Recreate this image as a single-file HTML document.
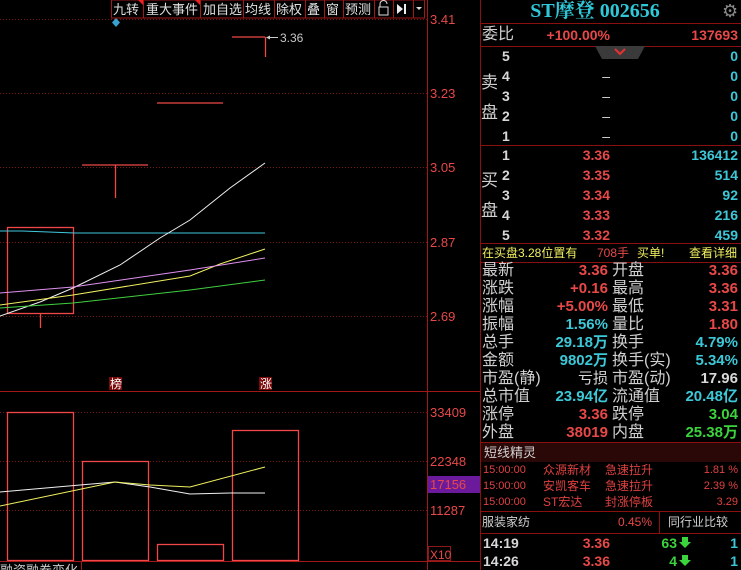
<!DOCTYPE html>
<html><head><meta charset="utf-8"><style>
*{margin:0;padding:0;box-sizing:border-box}
body{width:741px;height:570px;background:#000;overflow:hidden;position:relative;font-family:"Liberation Sans","Noto Sans CJK SC",sans-serif;}
.a{position:absolute;white-space:nowrap}
.r{color:#e84848}.c{color:#3cc8d8}.g{color:#3cd43c}.w{color:#d8d8d8}.y{color:#f0f060}
.b{font-weight:bold}
.hl{position:absolute;height:1px;background:#8a1010}
.vl{position:absolute;width:1px;background:#8a1010}
.lab{font-size:14px;line-height:18px;color:#d0d0d0}
.num{font-size:14px;line-height:18px;font-weight:bold;text-align:right}
</style></head><body>
<svg class="a" style="left:0;top:0" width="480" height="570">
<g stroke="#7a1818" stroke-dasharray="1,2" stroke-width="1">
<line x1="0" y1="19.5" x2="427" y2="19.5"/><line x1="0" y1="93.5" x2="427" y2="93.5"/><line x1="0" y1="167.5" x2="427" y2="167.5"/><line x1="0" y1="242.5" x2="427" y2="242.5"/><line x1="0" y1="316.5" x2="427" y2="316.5"/>
<line x1="0" y1="412.5" x2="427" y2="412.5"/><line x1="0" y1="461.5" x2="427" y2="461.5"/><line x1="0" y1="510.5" x2="427" y2="510.5"/>
</g>
<line x1="427.5" y1="0" x2="427.5" y2="570" stroke="#a01818"/>
<line x1="0" y1="391.5" x2="480" y2="391.5" stroke="#a01818"/>
<line x1="0" y1="561.5" x2="480" y2="561.5" stroke="#a01818"/>
<g stroke="#f04848" fill="none" stroke-width="1.3">
<rect x="7.5" y="227.5" width="66" height="86"/><line x1="40.5" y1="313" x2="40.5" y2="328"/>
<line x1="82" y1="165" x2="148" y2="165"/><line x1="115.5" y1="165" x2="115.5" y2="198"/>
<line x1="157" y1="103" x2="223" y2="103"/>
<line x1="232" y1="37" x2="265" y2="37"/><line x1="265.5" y1="37" x2="265.5" y2="57"/>
<rect x="7.5" y="412.5" width="66" height="148"/>
<rect x="82.5" y="461.5" width="66" height="99"/>
<rect x="157.5" y="544.5" width="66" height="16"/>
<rect x="232.5" y="430.5" width="66" height="130"/>
</g>
<polyline points="0,231 22,231 75,233 265,233" stroke="#40c8e0" fill="none"/>
<polyline points="0,316 40,302 73,288 120,265 160,238 190,220 230,188 265,163" stroke="#f0f0f0" fill="none"/>
<polyline points="0,305 73,295 190,276 220,264 265,249" stroke="#f0f060" fill="none"/>
<polyline points="0,293 73,287 190,270 265,258" stroke="#e090f0" fill="none"/>
<polyline points="0,308 73,303 190,290 265,280" stroke="#40d040" fill="none"/>
<polyline points="0,492 80,485 115,482 150,487 190,494 230,493 265,493" stroke="#f0f0f0" fill="none"/>
<polyline points="0,506 115,482 150,485 190,487 265,467" stroke="#f0f060" fill="none"/>
<line x1="268" y1="37.5" x2="278" y2="37.5" stroke="#ccc"/>
<path d="M266 37.5 L270 35.5 L270 39.5Z" fill="#ccc"/>
<text x="280" y="42" fill="#c8c8c8" font-size="12" font-family="Liberation Sans">3.36</text>
<path d="M116 18 L120 22.5 L116 27 L112 22.5Z" fill="#3aa0d0"/>
<g fill="#e84848" font-size="13" font-family="Liberation Sans">
<text x="430" y="24">3.41</text><text x="430" y="98">3.23</text><text x="430" y="172">3.05</text><text x="430" y="247">2.87</text><text x="430" y="321">2.69</text>
<text x="430" y="417">33409</text><text x="430" y="466">22348</text><text x="430" y="515">11287</text>
</g>
<rect x="428" y="476" width="52" height="17" fill="#6a1a9a"/>
<text x="430" y="489" fill="#e84848" font-size="13" font-family="Liberation Sans">17156</text>
<rect x="428.5" y="546.5" width="22" height="14" fill="none" stroke="#8a1818"/>
<text x="430" y="559" fill="#e84848" font-size="12" font-family="Liberation Sans">X10</text>
<rect x="109" y="377" width="13" height="13" fill="#7a0a0a"/><text x="110" y="388" fill="#fff" font-size="12" font-family="Noto Sans CJK SC">榜</text>
<rect x="259" y="377" width="13" height="13" fill="#7a0a0a"/><text x="260" y="388" fill="#fff" font-size="12" font-family="Noto Sans CJK SC">涨</text>
<line x1="81.5" y1="562" x2="81.5" y2="570" stroke="#a01818"/>
<text x="0" y="575" fill="#ccc" font-size="13" font-family="Noto Sans CJK SC">融资融券变化</text>
<rect x="111.5" y="0" width="313" height="18" fill="#000" stroke="#a01818"/>
<g stroke="#a01818"><line x1="143.5" y1="0" x2="143.5" y2="18"/><line x1="200.5" y1="0" x2="200.5" y2="18"/><line x1="243.5" y1="0" x2="243.5" y2="18"/><line x1="274.5" y1="0" x2="274.5" y2="18"/><line x1="305.5" y1="0" x2="305.5" y2="18"/><line x1="324.5" y1="0" x2="324.5" y2="18"/><line x1="343.5" y1="0" x2="343.5" y2="18"/><line x1="374.5" y1="0" x2="374.5" y2="18"/><line x1="393.5" y1="0" x2="393.5" y2="18"/><line x1="413.5" y1="0" x2="413.5" y2="18"/></g>
<path d="M138 0 L143 0 L143 5Z M195 0 L200 0 L200 5Z" fill="#f02020"/>
<g fill="#e0e0e0" font-size="13" font-family="Noto Sans CJK SC">
<text x="113" y="14">九转</text><text x="146" y="14">重大事件</text><text x="203" y="14">加自选</text><text x="245" y="14">均线</text><text x="276" y="14">除权</text><text x="307" y="14">叠</text><text x="326" y="14">窗</text><text x="345" y="14">预测</text>
</g>
<rect x="379" y="7" width="9" height="8" fill="none" stroke="#ddd"/><path d="M380 7 V4 a3.5 3.5 0 0 1 7 0" fill="none" stroke="#ddd"/>
<path d="M397 4 L403 9 L397 14Z" fill="#eee"/><rect x="404" y="4" width="2" height="10" fill="#eee"/>
<path d="M416 7 L422 7 L419 10Z" fill="#ddd"/>
</svg>

<div class="vl" style="left:480px;top:0;height:570px"></div>
<div class="a b c" style="left:480px;width:230px;top:0;text-align:center;font:bold 20px 'Liberation Serif','Noto Serif CJK SC',serif;line-height:22px;color:#30c8d8">ST摩登 002656</div>
<div class="a" style="left:722px;top:0;font-size:18px;line-height:22px;color:#888">⚙</div>
<div class="hl" style="left:480px;width:261px;top:23px"></div>
<div class="a lab" style="left:482px;top:25px;font-size:16px;line-height:20px">委比</div>
<div class="a num r" style="left:530px;width:80px;top:26px">+100.00%</div>
<div class="a num r" style="left:650px;width:88px;top:26px">137693</div>
<div class="hl" style="left:480px;width:261px;top:46px"></div>
<svg class="a" style="left:595px;top:46px" width="50" height="14"><path d="M0 0 H50 L43 13 H7Z" fill="#3a3a3a"/><path d="M20 3 L25 8 L30 3" stroke="#e83030" stroke-width="2" fill="none"/></svg>
<div class="a lab" style="left:481px;top:68px;font-size:17px;line-height:30px;width:18px">卖<br>盘</div>
<div class="a lab" style="left:481px;top:166px;font-size:17px;line-height:30px;width:18px">买<br>盘</div>
<div class="a num w" style="left:502px;top:46px;text-align:left;line-height:20px">5<br>4<br>3<br>2<br>1</div>
<div class="a num w" style="left:560px;width:50px;top:46px;line-height:20px;font-weight:normal"><br>–<br>–<br>–<br>–</div>
<div class="a num c" style="left:680px;width:58px;top:46px;line-height:20px">0<br>0<br>0<br>0<br>0</div>
<div class="hl" style="left:480px;width:261px;top:145px"></div>
<div class="a num w" style="left:502px;top:145px;text-align:left;line-height:20px">1<br>2<br>3<br>4<br>5</div>
<div class="a num r" style="left:560px;width:50px;top:145px;line-height:20px">3.36<br>3.35<br>3.34<br>3.33<br>3.32</div>
<div class="a num c" style="left:660px;width:78px;top:145px;line-height:20px">136412<br>514<br>92<br>216<br>459</div>
<div class="hl" style="left:480px;width:261px;top:243px"></div>
<div class="a y" style="left:482px;top:244px;font-size:12px;line-height:18px">在买盘3.28位置有</div>
<div class="a r" style="left:597px;top:244px;font-size:12px;line-height:18px">708手</div>
<div class="a y" style="left:637px;top:244px;font-size:12px;line-height:18px">买单!</div>
<div class="a y" style="left:689px;top:244px;font-size:12px;line-height:18px">查看详细</div>
<div class="hl" style="left:480px;width:261px;top:262px"></div>
<div class="a lab" style="left:482px;top:262px;font-size:16px">最新<br>涨跌<br>涨幅<br>振幅<br>总手<br>金额<br>市盈(静)<br>总市值<br>涨停<br>外盘</div>
<div class="a lab" style="left:612px;top:262px;font-size:16px">开盘<br>最高<br>最低<br>量比<br>换手<br>换手(实)<br>市盈(动)<br>流通值<br>跌停<br>内盘</div>
<div class="a num" style="left:530px;width:78px;top:262px;font-size:15px"><span class="r">3.36</span><br><span class="r">+0.16</span><br><span class="r">+5.00%</span><br><span class="c">1.56%</span><br><span class="c">29.18万</span><br><span class="c">9802万</span><br><span class="w" style="font-weight:normal">亏损</span><br><span class="c">23.94亿</span><br><span class="r">3.36</span><br><span class="r">38019</span></div>
<div class="a num" style="left:660px;width:78px;top:262px;font-size:15px"><span class="r">3.36</span><br><span class="r">3.36</span><br><span class="r">3.31</span><br><span class="r">1.80</span><br><span class="c">4.79%</span><br><span class="c">5.34%</span><br><span class="w">17.96</span><br><span class="c">20.48亿</span><br><span class="g">3.04</span><br><span class="g">25.38万</span></div>
<div class="hl" style="left:480px;width:261px;top:442px"></div>
<div class="a" style="left:481px;top:443px;width:260px;height:19px;background:#2a0808"></div>
<div class="a lab" style="left:484px;top:443px;font-size:13px;line-height:19px">短线精灵</div>
<div class="a r" style="left:483px;top:462px;font-size:11px;line-height:16px;color:#e04040">15:00:00<br>15:00:00<br>15:00:00</div>
<div class="a r" style="left:543px;top:462px;font-size:12px;line-height:16px;color:#e04040">众源新材<br>安凯客车<br>ST宏达</div>
<div class="a r" style="left:605px;top:462px;font-size:12px;line-height:16px;color:#e04040">急速拉升<br>急速拉升<br>封涨停板</div>
<div class="a r" style="left:690px;width:48px;top:462px;font-size:11px;line-height:16px;text-align:right;color:#e04040">1.81 %<br>2.39 %<br>3.29</div>
<div class="hl" style="left:480px;width:261px;top:511px"></div>
<div class="a lab" style="left:482px;top:513px;font-size:12px;line-height:18px">服装家纺</div>
<div class="a r" style="left:618px;top:513px;font-size:12px;line-height:18px">0.45%</div>
<div class="vl" style="left:659px;top:511px;height:22px"></div>
<div class="a lab" style="left:668px;top:513px;font-size:12px;line-height:18px">同行业比较</div>
<div class="hl" style="left:480px;width:261px;top:533px"></div>
<div class="a num w" style="left:483px;top:534px;text-align:left;line-height:18px">14:19<br>14:26</div>
<div class="a num r" style="left:560px;width:50px;top:534px;line-height:18px">3.36<br>3.36</div>
<div class="a num g" style="left:640px;width:37px;top:534px;line-height:18px">63<br>4</div>
<svg class="a" style="left:679px;top:537px" width="12" height="30"><path d="M3 0h6v5h3l-6 6-6-6h3z M3 18h6v5h3l-6 6-6-6h3z" fill="#3cd43c"/></svg>
<div class="a num c" style="left:720px;width:18px;top:534px;line-height:18px">1<br>1</div>
</body></html>
